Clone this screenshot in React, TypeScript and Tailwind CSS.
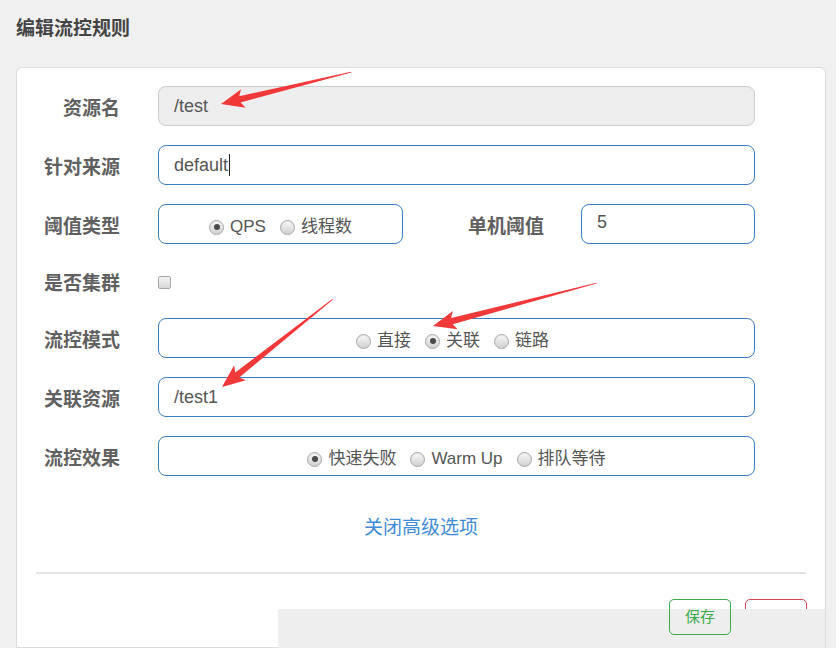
import React from "react";

const FONT = "font-['Liberation_Sans','Noto_Sans_CJK_SC',sans-serif]";

function Radio({ checked, label }: { checked?: boolean; label: string }) {
  return (
    <span className="inline-flex items-center">
      <span className="w-[15px] h-[15px] rounded-full border border-[#a8a8a8] bg-linear-to-b from-[#fafafa] to-[#d0d0d0] flex items-center justify-center shadow-[inset_0_1px_1px_rgba(0,0,0,0.08)]">
        {checked && <span className="w-[6px] h-[6px] rounded-full bg-[#4a4a4a]" />}
      </span>
      <span className="ml-[6px]">{label}</span>
    </span>
  );
}

function Label({ children, w = "w-[103px]" }: { children: React.ReactNode; w?: string }) {
  return (
    <div className={`${w} shrink-0 pt-[4px] text-right text-[19px] font-bold text-[#606060] leading-none`}>{children}</div>
  );
}

function Arrow({ tx, ty, angle, len }: { tx: number; ty: number; angle: number; len: number }) {
  const pts = `0,0 23,-9.5 19.5,-3.2 ${len},-0.4 ${len},0.4 19.5,3.2 23,9.5`;
  return (
    <g transform={`translate(${tx},${ty}) rotate(${angle})`}>
      <polygon points={pts} fill="#f2393a" />
    </g>
  );
}

export default function App() {
  return (
    <div className={`relative w-[836px] h-[648px] overflow-hidden bg-[#f0f0f0] ${FONT} flex flex-col`}>
      <div className="pl-4 pt-[15px] h-[67px] text-[19px] font-bold text-[#444] leading-[28px]">编辑流控规则</div>
      <div className="ml-4 w-[810px] flex-1 bg-white border border-[#dcdcdc] rounded-t-[6px] pt-[18px] flex flex-col">
        <div className="flex flex-col gap-[19px]">
          <div className="flex items-center h-10">
            <Label>资源名</Label>
            <div className="ml-[38px] w-[597px] h-10 rounded-[8px] border border-[#cccccc] bg-[#eeeeee] flex items-center pl-[15px] text-[18px] text-[#555]">/test</div>
          </div>
          <div className="flex items-center h-10">
            <Label>针对来源</Label>
            <div className="ml-[38px] w-[597px] h-10 rounded-[8px] border border-[#3b7cc0] bg-white flex items-center pl-[15px] text-[18px] text-[#555]">
              default<span className="inline-block w-px h-[22px] bg-[#222] ml-px" />
            </div>
          </div>
          <div className="flex items-center h-10">
            <Label>阈值类型</Label>
            <div className="ml-[38px] w-[245px] h-10 rounded-[8px] border border-[#3b7cc0] bg-white flex items-center justify-center gap-[14px] pt-[6px] text-[17px] text-[#555]">
              <Radio checked label="QPS" />
              <Radio label="线程数" />
            </div>
            <Label w="w-[141px]">单机阈值</Label>
            <div className="ml-[37px] w-[174px] h-10 rounded-[8px] border border-[#3b7cc0] bg-white flex items-center pl-[15px] pb-[4px] text-[18px] text-[#555]">5</div>
          </div>
          <div className="flex items-center h-[36px]">
            <Label>是否集群</Label>
            <span className="ml-[38px] mt-[2px] w-[13px] h-[13px] rounded-[2px] border border-[#a8a8a8] bg-linear-to-b from-[#f4f4f4] to-[#d8d8d8]" />
          </div>
          <div className="flex items-center h-10">
            <Label>流控模式</Label>
            <div className="ml-[38px] w-[597px] h-10 rounded-[8px] border border-[#3b7cc0] bg-white flex items-center justify-center gap-[14px] pt-[6px] pr-[8px] text-[17px] text-[#555]">
              <Radio label="直接" />
              <Radio checked label="关联" />
              <Radio label="链路" />
            </div>
          </div>
          <div className="flex items-center h-10">
            <Label>关联资源</Label>
            <div className="ml-[38px] w-[597px] h-10 rounded-[8px] border border-[#3b7cc0] bg-white flex items-center pl-[15px] text-[18px] text-[#555]">/test1</div>
          </div>
          <div className="flex items-center h-10">
            <Label>流控效果</Label>
            <div className="ml-[38px] w-[597px] h-10 rounded-[8px] border border-[#3b7cc0] bg-white flex items-center justify-center gap-[14px] pt-[6px] text-[17px] text-[#555]">
              <Radio checked label="快速失败" />
              <Radio label="Warm Up" />
              <Radio label="排队等待" />
            </div>
          </div>
        </div>
        <div className="mt-[40px] text-center text-[19px] leading-[24px] text-[#3f8bd6]">关闭高级选项</div>
        <div className="mx-[19px] mt-[32px] h-[2px] bg-[#e4e4e4]" />
        <div className="flex justify-end gap-[14px] mt-[25px] mr-[18px]">
          <div className="relative z-10 w-[62px] h-[36px] rounded-[5px] border border-[#3bab4b] flex items-center justify-center text-[15px] text-[#3bab4b]">保存</div>
          <div className="w-[62px] h-[36px] rounded-[5px] border border-[#d9434f] flex items-center justify-center text-[15px] text-[#d9434f]">取消</div>
        </div>
      </div>
      <div className="absolute left-[278px] top-[609px] w-[547px] h-[39px] bg-[#eeeeee]" />
      <svg className="absolute inset-0 pointer-events-none" width="836" height="648">
        <Arrow tx={221} ty={104} angle={-13.8} len={134} />
        <Arrow tx={433} ty={326} angle={-14.7} len={169} />
        <Arrow tx={222} ty={387} angle={-38.4} len={141} />
      </svg>
    </div>
  );
}
